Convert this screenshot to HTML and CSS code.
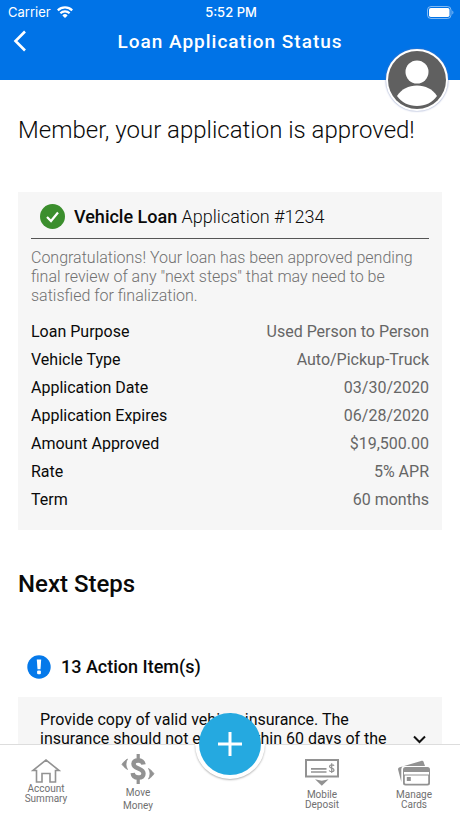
FILE: index.html
```
<!DOCTYPE html>
<html lang="en">
<head>
    <meta charset="UTF-8">
    <meta name="viewport" content="width=device-width, initial-scale=1">
    <title>Loan Application Status</title>
    <link rel="stylesheet" href="styles.css">
</head>
<body>
    <header class="header">
        <div class="status-bar">
            <div class="carrier">
                <span>Carrier</span>
                <svg width="16" height="12" viewBox="0 0 16 12" fill="none" stroke="#fff" stroke-width="2.2">
                    <path d="M0.8 4.4a10.2 10.2 0 0 1 14.4 0"/>
                    <path d="M3.4 7.2a6.5 6.5 0 0 1 9.2 0"/>
                    <path d="M8 12L5.4 9.4a3.7 3.7 0 0 1 5.2 0z" fill="#fff" stroke="none"/>
                </svg>
            </div>
            <span class="time">5:52 PM</span>
            <div class="battery">
                <svg width="27" height="13" viewBox="0 0 27 13">
                    <rect x="0.5" y="0.5" width="23.5" height="12" rx="3.5" fill="none" stroke="#fff" stroke-opacity="0.5"/>
                    <rect x="2" y="2" width="20.5" height="9" rx="1.8" fill="#fff"/>
                    <path d="M25.3 4.5v4c1.5-0.7 1.5-3.3 0-4z" fill="#fff" fill-opacity="0.5"/>
                </svg>
            </div>
        </div>
        <div class="title-bar">
            <button class="back-btn" type="button" aria-label="Back">
                <svg width="14" height="22" viewBox="0 0 14 22" fill="none" stroke="#fff" stroke-width="2.6">
                    <path d="M12 1.5L2.5 11l9.5 9.5"/>
                </svg>
            </button>
            <h1>Loan Application Status</h1>
        </div>
        <button class="avatar" type="button" aria-label="Profile">
            <svg width="58" height="58" viewBox="0 0 58 58">
                <circle cx="29" cy="29" r="29" fill="#606060"/>
                <circle cx="29" cy="21" r="11.5" fill="#fff"/>
                <path d="M9 45C13.5 38 20.5 34.500 29 34.500s15.500 3.500 20 10.500C44.500 51.500 37.500 55 29 55S13.500 51.500 9 45z" fill="#fff"/>
            </svg>
        </button>
    </header>

    <main class="content">
        <h2 class="greeting">Member, your application is approved!</h2>

        <section class="card">
            <div class="card-title">
                <svg width="25" height="25" viewBox="0 0 25 25">
                    <circle cx="12.5" cy="12.5" r="12.5" fill="#3b8e2d"/>
                    <path d="M7 13l4 4 7-8.5" fill="none" stroke="#fff" stroke-width="2.2"/>
                </svg>
                <h3><b>Vehicle Loan</b> Application #1234</h3>
            </div>
            <p class="message">Congratulations! Your loan has been approved pending final review of any "next steps" that may need to be satisfied for finalization.</p>
            <dl class="details">
                <div><dt>Loan Purpose</dt><dd>Used Person to Person</dd></div>
                <div><dt>Vehicle Type</dt><dd>Auto/Pickup-Truck</dd></div>
                <div><dt>Application Date</dt><dd>03/30/2020</dd></div>
                <div><dt>Application Expires</dt><dd>06/28/2020</dd></div>
                <div><dt>Amount Approved</dt><dd>$19,500.00</dd></div>
                <div><dt>Rate</dt><dd>5% APR</dd></div>
                <div><dt>Term</dt><dd>60 months</dd></div>
            </dl>
        </section>

        <h2 class="section-title">Next Steps</h2>
        <div class="action-count">
            <svg width="24" height="24" viewBox="0 0 24 24">
                <circle cx="12" cy="12" r="11.7" fill="#0579ea"/>
                <path d="M9.8 4.500h4.400l-0.700 9.700h-3z" fill="#fff"/>
                <rect x="10.100" y="15.500" width="3.800" height="3.800" rx="1" fill="#fff"/>
            </svg>
            <h3>13 Action Item(s)</h3>
        </div>
        <button class="action-item" type="button">
            <span class="action-text">Provide copy of valid vehicle insurance. The insurance should not expire within 60 days of the</span>
            <svg width="13" height="9" viewBox="0 0 13 9" fill="none" stroke="#111" stroke-width="2">
                <path d="M1 1.500l5.500 5.500L12 1.500"/>
            </svg>
        </button>
    </main>

    <nav class="tab-bar">
        <a class="tab tab-account" href="#account">
            <svg width="30" height="25" viewBox="0 0 30 25" fill="none" stroke="#929292" stroke-width="1.6">
                <path d="M5.500 11.500H1.800L15 1l13.200 10.500H24.500V23H19V14.500H11V23H5.500z"/>
            </svg>
            <span>Account<br>Summary</span>
        </a>
        <a class="tab tab-money" href="#money">
            <svg width="34" height="30" viewBox="0 0 34 30" fill="none" stroke="#929292">
                <path d="M22.500 10.500C22 7.500 20 6.500 17.200 6.500c-2.900 0-4.700 1.300-4.700 3.400 0 5.300 10 3.800 10 9.500 0 2.700-2.200 4.100-5.300 4.100-3.300 0-5.300-1.500-5.500-4.500" stroke-width="4.400"/>
                <path d="M17.200 0v5M17.200 25v5" stroke-width="3.200"/>
                <path d="M6.500 5C3 7 1 10.300 1 10.300S3 13.500 6.500 15.500c-2-3.700-2-6.800 0-10.500z" fill="#929292" stroke-width="0.800"/>
                <path d="M27.500 14.500c3.500 2 5.500 5.300 5.500 5.300s-2 3.200-5.500 5.200c2-3.700 2-6.800 0-10.500z" fill="#929292" stroke-width="0.800"/>
            </svg>
            <span>Move<br>Money</span>
        </a>
        <button class="add-btn" type="button" aria-label="Add">
            <svg width="26" height="26" viewBox="0 0 26 26" stroke="#fff" stroke-width="3">
                <path d="M13 1v24M1 13h24"/>
            </svg>
        </button>
        <a class="tab" href="#deposit">
            <svg width="34" height="27" viewBox="0 0 34 27">
                <rect x="1" y="1" width="32" height="16.500" fill="none" stroke="#929292" stroke-width="2"/>
                <path d="M6 9.800h15.500M6 13h15.500" stroke="#929292" stroke-width="1.700"/>
                <path d="M29 6.800C28.500 5.500 24.500 5.300 24.500 7.500c0 2 4.500 1.300 4.500 3.500 0 2.300-4.300 2-4.800 0.400M26.700 4.300v9.600" fill="none" stroke="#929292" stroke-width="1.200"/>
                <path d="M10 20.200l6.800 1.500 6.800-1.500-6.800 6.600z" fill="#929292"/>
            </svg>
            <span>Mobile<br>Deposit</span>
        </a>
        <a class="tab" href="#cards">
            <svg width="34" height="27" viewBox="0 0 34 27">
                <path d="M4.300 23L1.200 11c-0.400-1.400 0.200-2.300 1.600-2.700L24 2c1.400-0.400 2.400 0 2.800 1.400L28 7H8C5.500 7 4.300 8 4.300 10.500z" fill="#929292"/>
                <path d="M6 13v-2.500A2.500 2.500 0 0 1 8.500 8H30.500A2.500 2.500 0 0 1 33 10.500V13z" fill="#929292"/>
                <path d="M6 15.500h27v8.500a2.500 2.500 0 0 1-2.500 2.500h-22A2.500 2.500 0 0 1 6 24zM7.800 16.500v7.300a1 1 0 0 0 1 1h21.400a1 1 0 0 0 1-1v-7.300z" fill="#929292" fill-rule="evenodd"/>
                <path d="M6.500 12v5M32.500 12v5" stroke="#929292" stroke-width="1"/>
                <rect x="9.800" y="18" width="4" height="4" fill="#929292"/>
            </svg>
            <span>Manage<br>Cards</span>
        </a>
    </nav>
</body>
</html>
```
FILE: styles.css
```
* {
    box-sizing: border-box;
    margin: 0;
    padding: 0;
}

body {
    display: flex;
    flex-direction: column;
    height: 100vh;
    background: #fff;
    color: #0a0a0a;
    font-family: Roboto, "Liberation Sans", sans-serif;
    font-size: 16px;
}

button {
    border: none;
    background: none;
    color: inherit;
    font: inherit;
    cursor: pointer;
}

svg {
    display: block;
    flex: none;
}

/* header */
.header {
    position: relative;
    padding-bottom: 22px;
    background: #0073e7;
    color: #fff;
}

.status-bar {
    display: grid;
    grid-template-columns: 1fr auto 1fr;
    align-items: center;
    height: 24px;
    padding: 0 6px 0 8px;
    font-family: Inter, sans-serif;
    font-size: 13px;
}

.carrier {
    display: flex;
    align-items: center;
    gap: 6px;
}

.time {
    font-weight: 500;
}

.battery {
    justify-self: end;
}

.title-bar {
    display: grid;
    grid-template-columns: 1fr auto 1fr;
    align-items: center;
    height: 34px;
    padding: 0 13px;
}

.back-btn {
    justify-self: start;
    padding: 4px 0;
}

.title-bar h1 {
    font-size: 19px;
    font-weight: 500;
    letter-spacing: 1px;
}

.avatar {
    position: absolute;
    right: 12px;
    bottom: -31px;
    z-index: 1;
    border: 2px solid #fff;
    border-radius: 50%;
    background: #fff;
    box-shadow: 0 0 2px #6d7fb5;
}

/* content */
.content {
    flex: 1;
    min-height: 0;
    overflow-y: auto;
    padding: 32px 18px 0;
    scrollbar-width: none;
}

.greeting {
    font-size: 24px;
    font-weight: 300;
    line-height: 36px;
}

.card {
    margin-top: 44px;
    padding: 0 13px 16px;
    background: #f6f6f6;
}

.card-title {
    display: flex;
    align-items: center;
    gap: 9px;
    height: 47px;
    padding: 3px 9px 0;
    border-bottom: 1px solid #555;
}

.card-title h3 {
    font-size: 18px;
    font-weight: 300;
}

.card-title b {
    font-weight: 500;
}

.message {
    padding-top: 9px;
    color: #707070;
    font-weight: 300;
    line-height: 19px;
}

.details {
    margin-top: 13px;
}

.details div {
    display: flex;
    justify-content: space-between;
    line-height: 28px;
}

.details dd {
    color: #666;
}

.section-title {
    margin-top: 36px;
    font-size: 24px;
    font-weight: 500;
    line-height: 36px;
}

.action-count {
    display: flex;
    align-items: center;
    gap: 10px;
    margin-top: 53px;
    padding-left: 9px;
}

.action-count h3 {
    font-size: 18px;
    font-weight: 500;
    line-height: 24px;
}

.action-item {
    display: flex;
    justify-content: space-between;
    align-items: center;
    gap: 24px;
    width: 100%;
    min-height: 84px;
    margin-top: 18px;
    padding: 13px 16px 13px 22px;
    background: #f6f6f6;
    line-height: 19px;
    text-align: left;
}

.action-text {
    align-self: flex-start;
}

/* bottom tab bar */
.tab-bar {
    display: grid;
    grid-template-columns: repeat(5, 1fr);
    height: 74px;
    border-top: 1px solid #ddd;
    background: #fff;
}

.tab {
    display: flex;
    flex-direction: column;
    align-items: center;
    gap: 4px;
    padding-top: 14px;
    color: #707070;
    font-size: 10px;
    line-height: 10px;
    text-align: center;
    text-decoration: none;
}

.tab-account {
    gap: 0;
}

.tab-money {
    gap: 2px;
    padding-top: 9px;
    line-height: 13px;
}

.add-btn {
    position: relative;
    isolation: isolate;
    display: grid;
    place-items: center;
    place-self: start center;
    width: 62px;
    height: 62px;
    margin-top: -32px;
    border-radius: 50%;
}

.add-btn::after {
    content: "";
    position: absolute;
    inset: 0;
    z-index: -1;
    border-radius: 50%;
    background: #25a9e0;
}

/* white rim, only on the half that sits over the bar */
.add-btn::before {
    content: "";
    position: absolute;
    inset: 50% -4px -4px;
    z-index: -1;
    border-radius: 0 0 35px 35px;
    background: #fff;
    box-shadow: 0 1px 2px rgba(0, 0, 0, 0.3);
}
```
